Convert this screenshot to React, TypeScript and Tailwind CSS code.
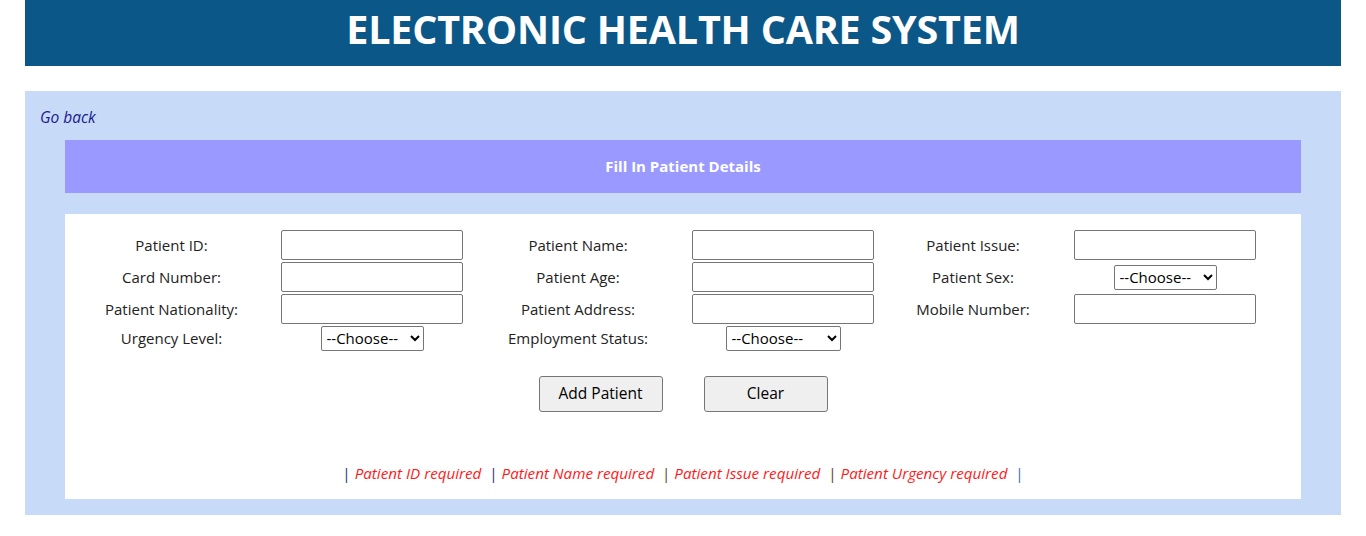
import React from "react";

const font = { fontFamily: '"Open Sans", "Noto Sans", sans-serif' };

function Label({ children }: { children: React.ReactNode }) {
  return (
    <div className="flex items-center justify-center text-[15px] text-[#222]">
      {children}
    </div>
  );
}

function Field() {
  return (
    <div className="flex items-center justify-center">
      <input
        type="text"
        className="w-[182px] h-[30px] border border-[#767676] rounded-[2px] bg-white"
      />
    </div>
  );
}

function Choose({ width }: { width: string }) {
  return (
    <div className="flex items-center justify-center">
      <select
        className={`${width} h-[25px] border border-[#767676] rounded-[2px] bg-white text-[15px] text-black pl-[1px]`}
        style={font}
        defaultValue=""
      >
        <option value="">--Choose--</option>
      </select>
    </div>
  );
}

export default function App() {
  return (
    <div className="bg-white w-[1366px] h-[536px]" style={font}>
      <div className="mx-[25px] h-[66px] bg-[#0b5787] flex items-center justify-center pb-[6px]">
        <h1 className="text-white font-bold text-[39.5px] leading-none tracking-[-0.2px]">
          ELECTRONIC HEALTH CARE SYSTEM
        </h1>
      </div>
      <div className="mx-[25px] mt-[25px] h-[424px] bg-[#c7daf8] pt-[16px] px-[40px]">
        <div className="-ml-[25px] h-[22px] flex items-center">
          <a className="italic text-[15.5px] text-[#1a1a8c]">Go back</a>
        </div>
        <div className="mt-[11px] h-[53px] bg-[#9999ff] flex items-center justify-center">
          <span className="text-white font-bold text-[15px]">Fill In Patient Details</span>
        </div>
        <div className="mt-[21px] h-[285px] bg-white pt-[16px]">
          <div className="grid grid-cols-[201px_200px_212px_198px_182px_202px] ml-[6px] gap-y-[2px] auto-rows-[30px]">
            <Label>Patient ID:</Label>
            <Field />
            <Label>Patient Name:</Label>
            <Field />
            <Label>Patient Issue:</Label>
            <Field />

            <Label>Card Number:</Label>
            <Field />
            <Label>Patient Age:</Label>
            <Field />
            <Label>Patient Sex:</Label>
            <Choose width="w-[103px]" />

            <Label>Patient Nationality:</Label>
            <Field />
            <Label>Patient Address:</Label>
            <Field />
            <Label>Mobile Number:</Label>
            <Field />
          </div>
          <div className="grid grid-cols-[201px_200px_212px_198px_182px_202px] ml-[6px] mt-[1px] h-[26px]">
            <Label>Urgency Level:</Label>
            <Choose width="w-[103px]" />
            <Label>Employment Status:</Label>
            <Choose width="w-[115px]" />
            <div />
            <div />
          </div>
          <div className="flex justify-center gap-[41px] mt-[25px]">
            <button className="w-[124px] h-[36px] bg-[#efefef] border border-[#767676] rounded-[3px] text-[15.5px] text-black">
              Add Patient
            </button>
            <button className="w-[124px] h-[36px] bg-[#efefef] border border-[#767676] rounded-[3px] text-[15.5px] text-black">
              Clear
            </button>
          </div>
          <div className="mt-[50px] text-center text-[15.2px] italic text-[#24356f] whitespace-pre">
            <span className="not-italic">|</span> <span className="text-[#ff1a1a]">Patient ID required</span>  <span className="not-italic">|</span><span className="text-[#ff1a1a]"> Patient Name required</span>  <span className="not-italic text-[#6a3a1a]">|</span><span className="text-[#ff1a1a]"> Patient Issue required</span>  <span className="not-italic text-[#6a3a1a]">|</span><span className="text-[#ff1a1a]"> Patient Urgency required</span>  <span className="not-italic text-[#3a6ab0]">|</span>
          </div>
        </div>
      </div>
    </div>
  );
}
